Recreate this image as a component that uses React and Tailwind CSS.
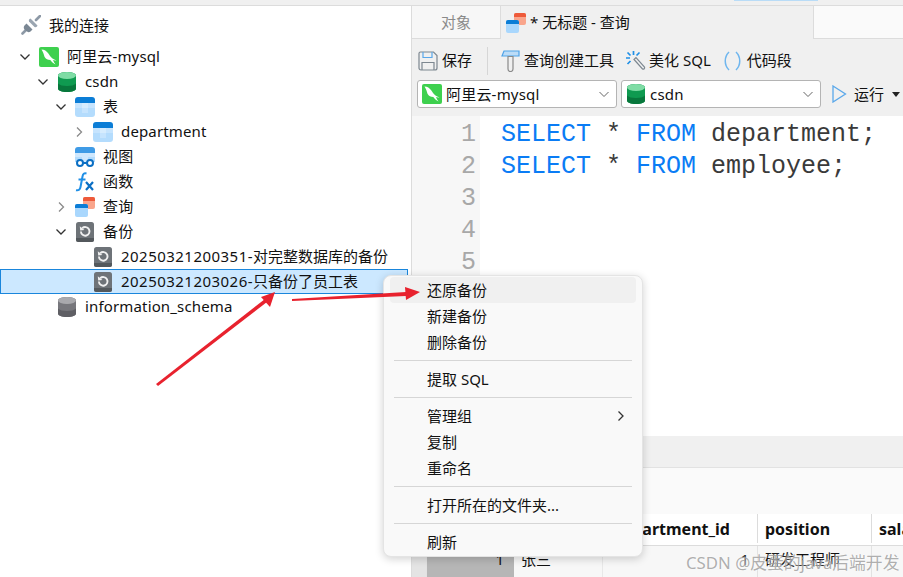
import React from "react";

const uiFont = "font-['Noto_Sans','Noto_Sans_CJK_SC',sans-serif]";

// tree + toolbar icons
const MysqlIcon = () => (
  <svg width="20" height="20" viewBox="0 0 20 20">
    <rect width="20" height="20" rx="2" fill="#3ed04e" />
    <path d="M2.500 2.500c3 .2 5 1.500 6.500 3.500 1.500 2 2.500 4 4.500 5.500 1 .8 2.500 1.500 4 2-1.500.2-2.500 0-3.500-.4.500 1.400 1.300 2.800 2.500 4.400-2.300-1-4-2.500-5.200-4.400C8.500 12.500 7 12 6 10.500 5 9 5 7.500 4.300 6 3.800 4.700 3.200 3.500 2.500 2.500z" fill="#fff" />
  </svg>
);

const DbIcon = ({ top = "#7fdca5", mid = "#0f9a50", low = "#08773c" }) => (
  <svg width="18" height="20" viewBox="0 0 18 20">
    <path d="M0 3.500C0 1.500 4 0 9 0s9 1.500 9 3.500v13c0 2-4 3.500-9 3.500s-9-1.500-9-3.500z" fill={mid} />
    <path d="M0 11.500c1.500 1.700 5 2.500 9 2.500s7.500-.8 9-2.500v5c0 2-4 3.500-9 3.500s-9-1.500-9-3.500z" fill={low} />
    <ellipse cx="9" cy="3.500" rx="9" ry="3.500" fill={top} />
  </svg>
);

const TableIcon = ({ size = 20 }) => (
  <svg width={size} height={size} viewBox="0 0 20 20">
    <path d="M0 5h20v12a3 3 0 0 1-3 3H3a3 3 0 0 1-3-3z" fill="#b4dcfd" />
    <path d="M7 5h6v6H7z" fill="#d6ecfe" />
    <path d="M0 5h7v6H0zM13 5h7v6h-7zM7 11h6v5H7z" fill="#c6e4fe" />
    <path d="M3 0h14a3 3 0 0 1 3 3v3H0V3a3 3 0 0 1 3-3z" fill="#0b7dd6" />
  </svg>
);

const ViewIcon = () => (
  <svg width="20" height="20" viewBox="0 0 20 20">
    <path d="M0 5h20v10H0z" fill="#cfe8fe" />
    <path d="M0 10h7v5H0zM13 10h7v5h-7z" fill="#b4dcfd" />
    <path d="M3 0h14a3 3 0 0 1 3 3v3H0V3a3 3 0 0 1 3-3z" fill="#3f9be6" />
    <circle cx="5" cy="16" r="3" fill="#fff" stroke="#0b6fc4" strokeWidth="2" />
    <circle cx="15" cy="16" r="3" fill="#fff" stroke="#0b6fc4" strokeWidth="2" />
    <path d="M8 16h4" stroke="#0b6fc4" strokeWidth="2" />
  </svg>
);

const FxIcon = () => (
  <svg width="20" height="20" viewBox="0 0 20 20">
    <path d="M11.500 1.500C9 .8 8 2 7.500 4.500L5.500 15c-.4 2.500-1.800 3.800-4.500 3.200" fill="none" stroke="#1f8fe6" strokeWidth="2" />
    <path d="M3.500 7.500h7" stroke="#1f8fe6" strokeWidth="2" />
    <path d="M11 10l7 8M18 10l-7 8" stroke="#0b6fc4" strokeWidth="2.200" />
  </svg>
);

const QueryIcon = ({ size = 20 }) => (
  <svg width={size} height={size} viewBox="0 0 20 20">
    <rect x="8" y="0" width="12" height="12" rx="2" fill="#f9a58c" />
    <path d="M10 0h8a2 2 0 0 1 2 2v2H8V2a2 2 0 0 1 2-2z" fill="#ee5a3a" />
    <rect x="0" y="7" width="13" height="13" rx="2" fill="#a9d7fd" />
    <path d="M2 7h9a2 2 0 0 1 2 2v2H0V9a2 2 0 0 1 2-2z" fill="#0b7dd6" />
  </svg>
);

const BackupIcon = () => (
  <svg width="18" height="20" viewBox="0 0 18 20">
    <rect width="18" height="20" rx="2.500" fill="#6e7378" />
    <path d="M0 16h18v1.500A2.500 2.500 0 0 1 15.500 20h-13A2.500 2.500 0 0 1 0 17.500z" fill="#53585c" />
    <path d="M6.200 6.300A4.300 4.300 0 1 1 4.900 9.500" fill="none" stroke="#f0f0f0" strokeWidth="1.900" />
    <path d="M3.800 4.300l.4 4.200 4.200-.6z" fill="#f0f0f0" />
  </svg>
);

const PlugIcon = () => (
  <svg width="20" height="20" viewBox="0 0 20 20">
    <path d="M1.500 18.500l4-4M15 5l4-4" stroke="#8d99a6" strokeWidth="2.600" strokeLinecap="round" />
    <path d="M9.500 3.500l7 7c-.5 1.500-1.500 2-3 1.500L8 6.500c-.5-1.500 0-2.500 1.500-3z" fill="#9aa5b1" />
    <path d="M3.500 10.500l2-2 6 6-2 2c-1.500 1-3 .8-4.200-.5L3.500 14.500C2.500 13.200 2.500 11.800 3.500 10.500z" fill="#7a8794" />
  </svg>
);

const Chevron = ({ open }) =>
  open ? (
    <svg width="14" height="14" viewBox="0 0 14 14">
      <path d="M2.500 4.500L7 9l4.500-4.500" fill="none" stroke="#333" strokeWidth="1.300" />
    </svg>
  ) : (
    <svg width="14" height="14" viewBox="0 0 14 14">
      <path d="M5 2.500L9.500 7 5 11.500" fill="none" stroke="#8a8a8a" strokeWidth="1.300" />
    </svg>
  );

const SaveIcon = () => (
  <svg width="20" height="20" viewBox="0 0 20 20" fill="none">
    <path d="M2.500 1h13L19 4.500V17a2 2 0 0 1-2 2H3a2 2 0 0 1-2-2V2.500A1.500 1.500 0 0 1 2.500 1z" stroke="#7d8790" strokeWidth="1.200" />
    <path d="M5 1v5.500h9V1" stroke="#5aa8ea" strokeWidth="1.200" />
    <path d="M4 19v-7.500h12V19" stroke="#7d8790" strokeWidth="1.200" />
  </svg>
);

const BuilderIcon = () => (
  <svg width="19" height="22" viewBox="0 0 19 22" fill="none">
    <path d="M3 1h15v5H1z" fill="#bcdcf7" stroke="#4fa3e8" strokeWidth="1.200" />
    <path d="M7 6.500h5V19a2.500 2.500 0 0 1-5 0z" fill="#f0f0f0" stroke="#8a8a8a" strokeWidth="1.200" />
  </svg>
);

const BeautifyIcon = () => (
  <svg width="21" height="20" viewBox="0 0 21 20" fill="none">
    <path d="M9 8.500l2-2 8.500 9.500a1.500 1.500 0 0 1-2 2z" fill="#f0f0f0" stroke="#7d8790" strokeWidth="1.200" />
    <path d="M8.500 0v4M1 7h4M2.500 1.500l3 3M14.500 1.500l-3 3M2.500 13l3-3" stroke="#1f8fe6" strokeWidth="1.700" />
  </svg>
);

const SnippetIcon = () => (
  <svg width="19" height="20" viewBox="0 0 19 20" fill="none" stroke="#6fb6ee" strokeWidth="1.500">
    <path d="M6 1C1 6 1 14 6 19" />
    <path d="M13 1c5 5 5 13 0 18" />
  </svg>
);

const SelectBox = ({ icon, label }) => (
  <div className="flex h-[28px] w-[200px] items-center rounded-[3px] border border-[#b4b4b4] bg-white pl-[4px]">
    <span className="flex w-[20px] justify-center">{icon}</span>
    <span className="ml-[4px] flex-1 tracking-[0.2px] text-[15px] text-[#111]">{label}</span>
    <svg width="12" height="12" viewBox="0 0 12 12" className="mr-[6px]">
      <path d="M1.500 4L6 8.500 10.500 4" fill="none" stroke="#666" strokeWidth="1" />
    </svg>
  </div>
);

const Row = ({ pad, chevron, icon, text, stamp, selected }) => (
  <div
    className={`flex h-[25px] items-center ${pad} ${
      selected ? "mr-[3px] border border-[#1a86dc] bg-[#cce8ff]" : ""
    }`}
  >
    <span className="flex h-[14px] w-[14px] items-center justify-center">
      {chevron === "open" && <Chevron open />}
      {chevron === "closed" && <Chevron />}
    </span>
    <span className="ml-[7px] flex w-[20px] justify-center">{icon}</span>
    <span className="ml-[8px] whitespace-nowrap tracking-[0.15px] text-[15px] text-[#111]">
      {stamp && <span className="tracking-[0.47px]">{stamp}</span>}
      {stamp ? <span className="tracking-normal">{text}</span> : text}
    </span>
  </div>
);

const MenuItem = ({ children, active, arrow }) => (
  <div
    className={`mx-[6px] flex h-[26px] items-center justify-between rounded-[4px] pl-[37px] pr-[10px] text-[15px] text-[#111] ${
      active ? "bg-[#f0f0f0]" : ""
    }`}
  >
    <span>{children}</span>
    {arrow && (
      <svg width="10" height="12" viewBox="0 0 10 12">
        <path d="M2.500 1.500L7 6l-4.500 4.500" fill="none" stroke="#333" strokeWidth="1.300" />
      </svg>
    )}
  </div>
);

const MenuLine = () => <div className="mx-[10px] my-[5px] h-px bg-[#d6d6d6]" />;

export default function App() {
  return (
    <div className={`relative flex h-[577px] w-[903px] flex-col overflow-hidden bg-white ${uiFont}`}>
      {/* window top strip */}
      <div className="relative h-[6px] shrink-0 border-b border-[#dcdcdc] bg-[#f0f0f0]">
        <div className="absolute left-[734px] top-0 h-[1px] w-[84px] bg-[#b9dcf7]" />
      </div>

      <div className="flex min-h-0 flex-1">
        {/* connection tree */}
        <div className="w-[411px] shrink-0 bg-white">
          <div className="flex h-[38px] items-center pl-[21px]">
            <PlugIcon />
            <span className="ml-[8px] text-[15px] text-[#111]">我的连接</span>
          </div>
          <Row pad="pl-[18px]" chevron="open" icon={<MysqlIcon />} text="阿里云-mysql" />
          <Row pad="pl-[36px]" chevron="open" icon={<DbIcon />} text="csdn" />
          <Row pad="pl-[54px]" chevron="open" icon={<TableIcon />} text="表" />
          <Row pad="pl-[72px]" chevron="closed" icon={<TableIcon />} text="department" />
          <Row pad="pl-[54px]" icon={<ViewIcon />} text="视图" />
          <Row pad="pl-[54px]" icon={<FxIcon />} text="函数" />
          <Row pad="pl-[54px]" chevron="closed" icon={<QueryIcon />} text="查询" />
          <Row pad="pl-[54px]" chevron="open" icon={<BackupIcon />} text="备份" />
          <Row pad="pl-[72px]" icon={<BackupIcon />} stamp="20250321200351-" text="对完整数据库的备份" />
          <Row pad="pl-[71px]" selected icon={<BackupIcon />} stamp="20250321203026-" text="只备份了员工表" />
          <Row pad="pl-[36px]" icon={<DbIcon top="#a9a9ad" mid="#77777c" low="#5f5f64" />} text="information_schema" />
        </div>

        {/* query pane */}
        <div className="flex min-w-0 flex-1 flex-col border-l border-[#dcdcdc] bg-[#f0f0f0]">
          {/* tabs */}
          <div className="flex h-[33px] shrink-0 bg-[#fafafa]">
            <div className="flex w-[89px] items-center justify-center border-b border-r border-[#dcdcdc] bg-[#f7f7f7] text-[15px] text-[#8a8a8a]">
              对象
            </div>
            <div className="flex w-[313px] items-center border-r border-[#dcdcdc] bg-[#f0f0f0] pl-[5px] text-[15px] text-[#111]">
              <QueryIcon />
              <span className="ml-[4px]">* 无标题 - 查询</span>
            </div>
            <div className="flex-1 border-b border-[#dcdcdc]" />
          </div>

          {/* toolbar */}
          <div className="flex h-[41px] shrink-0 items-center pl-[6px] pt-[2px] text-[15px] text-[#111]">
            <SaveIcon />
            <span className="ml-[4px]">保存</span>
            <div className="ml-[15px] h-[28px] w-px bg-[#d6d6d6]" />
            <span className="ml-[13px]"><BuilderIcon /></span>
            <span className="ml-[4px]">查询创建工具</span>
            <span className="ml-[11px]"><BeautifyIcon /></span>
            <span className="ml-[3px]">美化 SQL</span>
            <span className="ml-[12px]"><SnippetIcon /></span>
            <span className="ml-[5px]">代码段</span>
          </div>

          {/* connection / database pickers */}
          <div className="flex h-[36px] shrink-0 items-start gap-[4px] pl-[5px]">
            <SelectBox icon={<MysqlIcon />} label="阿里云-mysql" />
            <SelectBox icon={<DbIcon />} label="csdn" />
            <div className="ml-[7px] flex h-[28px] shrink-0 items-center whitespace-nowrap text-[15px] text-[#111]">
              <svg width="15" height="18" viewBox="0 0 15 18" className="shrink-0">
                <path d="M1 1l12.500 8L1 17z" fill="none" stroke="#5aa8ea" strokeWidth="1.300" />
              </svg>
              <span className="ml-[7px]">运行</span>
              <svg width="8" height="5" viewBox="0 0 8 5" className="ml-[8px] shrink-0">
                <path d="M0 0h8L4 5z" fill="#222" />
              </svg>
            </div>
          </div>

          {/* editor */}
          <div className="flex h-[320px] shrink-0 bg-white font-['Liberation_Mono',monospace] text-[25px] leading-[32px]">
            <div className="w-[68px] bg-[#f7f7f7] pr-[4px] pt-[3px] text-right text-[#a8a8a8]">
              <div>1</div>
              <div>2</div>
              <div>3</div>
              <div>4</div>
              <div>5</div>
            </div>
            <div className="pl-[21px] pt-[3px] text-[#3a3a3a]">
              <div className="whitespace-nowrap">
                <span className="text-[#0a7cf5]">SELECT</span> * <span className="text-[#0a7cf5]">FROM</span> department;
              </div>
              <div className="whitespace-nowrap">
                <span className="text-[#0a7cf5]">SELECT</span> * <span className="text-[#0a7cf5]">FROM</span> employee;
              </div>
            </div>
          </div>

          {/* result tabs + result toolbar */}
          <div className="h-[32px] shrink-0 border-b border-[#e2e2e2] bg-[#f0f0f0]" />
          <div className="h-[46px] shrink-0 bg-[#fafafa]" />

          {/* result grid */}
          <div className="grid h-[32px] shrink-0 grid-cols-[15px_87px_89px_155px_114px_1fr] border-b border-[#dcdcdc] bg-white pb-[2px] text-[16px] font-bold text-[#111]">
            <div className="border-r border-[#e2e2e2]" />
            <div className="border-r border-[#e2e2e2]" />
            <div className="border-r border-[#e2e2e2]" />
            <div className="flex items-center justify-end border-r border-[#dcdcdc] pr-[27px]">department_id</div>
            <div className="flex items-center border-r border-[#dcdcdc] pl-[7px]">position</div>
            <div className="flex items-center overflow-hidden pl-[7px]">salary</div>
          </div>
          <div className="grid min-h-0 flex-1 grid-cols-[15px_87px_89px_155px_114px_1fr] bg-[#f7f7f7] text-[15px] text-[#111]">
            <div className="border-r border-[#e2e2e2] bg-[#e4e4e4]" />
            <div className="flex items-start justify-end bg-[#b6b6b6] pr-[10px] pt-[2px]">1</div>
            <div className="border-r border-[#e8e8e8] pl-[7px] pt-[2px]">张三</div>
            <div className="border-r border-[#e2e2e2] pr-[8px] pt-[2px] text-right">1</div>
            <div className="whitespace-nowrap border-r border-[#e2e2e2] pl-[7px] pt-[2px]">研发工程师</div>
            <div />
          </div>
        </div>
      </div>

      {/* context menu */}
      <div className="absolute left-[383px] top-[275px] w-[260px] rounded-[8px] border border-[#e4e4e4] bg-[#f9f9f9] py-[1px] shadow-[0_2px_8px_rgba(0,0,0,0.18)]">
        <MenuItem active>还原备份</MenuItem>
        <MenuItem>新建备份</MenuItem>
        <MenuItem>删除备份</MenuItem>
        <MenuLine />
        <MenuItem>提取 SQL</MenuItem>
        <MenuLine />
        <MenuItem arrow>管理组</MenuItem>
        <MenuItem>复制</MenuItem>
        <MenuItem>重命名</MenuItem>
        <MenuLine />
        <MenuItem>打开所在的文件夹...</MenuItem>
        <MenuLine />
        <MenuItem>刷新</MenuItem>
      </div>

      {/* annotation arrows */}
      <svg className="pointer-events-none absolute left-0 top-0" width="903" height="577" viewBox="0 0 903 577">
        <path d="M156 384L265 299L267 302L158 386z" fill="#e8222e" />
        <path d="M275 292L261 297L270 307z" fill="#e8222e" />
        <path d="M292 299L406 292L406 296L292 301z" fill="#e8222e" />
        <path d="M420 292L405 287L406 300z" fill="#e8222e" />
      </svg>

      {/* watermark */}
      <div className="absolute left-[686px] top-[550px] whitespace-nowrap text-[16.800px] text-[#8c8c8c]/70 [text-shadow:0_0_2px_#fff]">
        CSDN @皮蛋的java后端开发
      </div>
    </div>
  );
}
